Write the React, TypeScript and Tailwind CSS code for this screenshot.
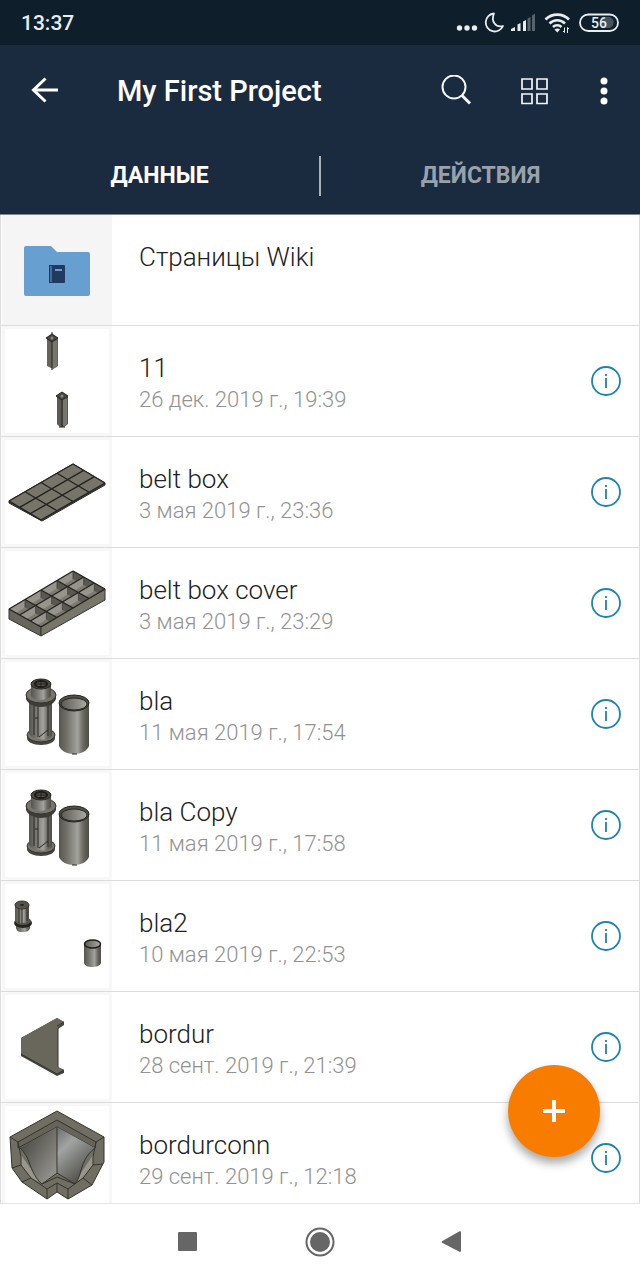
import type { ReactNode } from "react";

const boxTop = { top: [71, 27], right: [103, 46], left: [7, 64] };
const coverTop = { top: [71, 23], right: [103, 41], left: [7, 61] };

// lines of a 4x3 grid on a parallelogram seen from above
const gridPath = ({ top, right, left }: typeof boxTop) => {
  const sx = right[0] - top[0];
  const sy = right[1] - top[1];
  const lx = left[0] - top[0];
  const ly = left[1] - top[1];
  let d = "";
  for (let i = 0; i <= 4; i++) {
    d += `M${top[0] + (lx * i) / 4} ${top[1] + (ly * i) / 4}l${sx} ${sy}`;
  }
  for (let i = 0; i <= 3; i++) {
    d += `M${top[0] + (sx * i) / 3} ${top[1] + (sy * i) / 3}l${lx} ${ly}`;
  }
  return d;
};

// top corner of every compartment of the cover
const cells = [0, 1, 2, 3].flatMap((i) =>
  [0, 1, 2].map((j) => [71 - 16 * i + (32 * j) / 3, 23 + 9.5 * i + 6 * j])
);

const Thumb = ({ children }: { children: ReactNode }) => (
  <svg viewBox="0 0 110 110" className="size-[110px]" aria-hidden="true">
    <defs>
      <linearGradient id="metal">
        <stop offset="0" stopColor="#55544e" />
        <stop offset="0.3" stopColor="#77766f" />
        <stop offset="0.62" stopColor="#a3a39e" />
        <stop offset="0.8" stopColor="#6b6a63" />
        <stop offset="1" stopColor="#4c4b45" />
      </linearGradient>
      <linearGradient id="inside">
        <stop offset="0" stopColor="#5b5a53" />
        <stop offset="1" stopColor="#aaaaa6" />
      </linearGradient>
      <linearGradient id="wallLeft" x1="0" y1="0" x2="1" y2="1">
        <stop offset="0.2" stopColor="#504f49" />
        <stop offset="1" stopColor="#a09f99" />
      </linearGradient>
      <linearGradient id="wallRight" x1="0" y1="0" x2="0.6" y2="1">
        <stop offset="0" stopColor="#6b6d6d" />
        <stop offset="0.35" stopColor="#a1a4a3" />
        <stop offset="1" stopColor="#4b4a44" />
      </linearGradient>
    </defs>
    <rect x="3" y="3" width="104" height="104" fill="#fff" />
    {children}
  </svg>
);

const Posts = () => (
  <Thumb>
    <path d="M45 13l5-3 6 3v27l-5 3-6-3z" fill="#66645a" />
    <path d="M50 15h5v26l-5 2z" fill="#77756c" />
    <path d="M44 12l6-4 6 4-6 4z" fill="#46453e" stroke="#24231f" strokeWidth="1" />
    <circle cx="50" cy="12" r="1.5" fill="#8b897f" />
    <path d="M50 16v28M50 6v3" stroke="#24231f" strokeWidth="1" />
    <path d="M55 71l5-3 6 3v27l-4 3h-4l-3-3z" fill="#5b5950" />
    <path d="M61 73h4v25l-4 3z" fill="#77756c" />
    <path d="M54 70l6-4 6 4-6 4z" fill="#46453e" stroke="#24231f" strokeWidth="1" />
    <circle cx="60" cy="70" r="1.5" fill="#8b897f" />
    <path d="M60 74v27M57 101h6" stroke="#24231f" strokeWidth="1" />
  </Thumb>
);

const BeltBox = () => (
  <Thumb>
    <path d="M7 64L71 27l32 19v2L40 84 7 66z" fill="#45443d" stroke="#2b2a26" />
    <path d="M7 64L71 27l32 19-63 37z" fill="#77756a" />
    <path d={gridPath(boxTop)} fill="none" stroke="#24231f" strokeWidth="1.4" />
  </Thumb>
);

const BeltBoxCover = () => (
  <Thumb>
    <path d="M7 61l32 17v10L7 71z" fill="#68665c" stroke="#34332d" strokeWidth="1" />
    <path d="M39 78l64-37v11L39 88z" fill="#78766b" stroke="#34332d" strokeWidth="1" />
    <path d="M7 61L71 23l32 18-64 37z" fill="#7b7970" />
    {cells.map(([x, y]) => (
      <g key={`${x}-${y}`}>
        <path d={`M${x} ${y}v8l3.800 2.100 6.900-4.100z`} fill="#5a5951" />
        <path d={`M${x} ${y}v8l-9.100 5.400-6.900-3.900z`} fill="#96948c" />
        <path d={`M${x} ${y}v8`} stroke="#3d3c36" strokeWidth="0.800" />
      </g>
    ))}
    <path d={gridPath(coverTop)} fill="none" stroke="#24231f" strokeWidth="1.4" />
  </Thumb>
);

const Bla = () => (
  <Thumb>
    <path d="M25 76v3c0 4 6 7 14 7s14-3 14-7v-3z" fill="#45443e" />
    <ellipse cx="39" cy="76" rx="14" ry="7" fill="#77766e" stroke="#34332e" strokeWidth="1" />
    <path d="M27 42h23v35c-4 4-9 4-12 3-5 0-9-2-11-5z" fill="url(#metal)" />
    <path d="M32 47v29M36 47v31M46 46v31M33 59h3M37 78l9-7" fill="none" stroke="#282722" strokeWidth="1" />
    <path d="M24 36v4c2 5 8 8 15 8s13-3 15-8v-4z" fill="#3d3c36" />
    <ellipse cx="39" cy="36" rx="15" ry="8" fill="#77766e" stroke="#34332e" strokeWidth="1" />
    <path d="M29 25v12c3 5 17 5 20 0V25z" fill="url(#metal)" />
    <ellipse cx="39" cy="25" rx="10" ry="5" fill="#4a4943" stroke="#24231f" strokeWidth="1" />
    <ellipse cx="39" cy="25" rx="6" ry="3" fill="#5a5951" stroke="#1d1c19" strokeWidth="2" />
    <path d="M34 25h10M39 22v6" stroke="#1d1c19" strokeWidth="1" />
    <path d="M57 44v43c2 5 8 8 15 8s13-3 15-8V44z" fill="url(#metal)" />
    <ellipse cx="72" cy="44" rx="15" ry="8" fill="#504f49" stroke="#24231f" strokeWidth="1" />
    <ellipse cx="72" cy="45" rx="13" ry="6" fill="url(#inside)" stroke="#282722" strokeWidth="1" />
    <path d="M70 95h5" stroke="#24231f" strokeWidth="1" />
  </Thumb>
);

const Bla2 = () => (
  <Thumb>
    <path d="M14 43v4c1 4 3 4 7 4s6-1 7-4v-4z" fill="url(#metal)" />
    <ellipse cx="21" cy="42" rx="9" ry="5" fill="#24231f" />
    <ellipse cx="21" cy="40" rx="8" ry="4" fill="#56554e" />
    <path d="M13 24v15c2 4 12 4 14 0V24z" fill="url(#metal)" />
    <path d="M17 28v14M20 28v14M25 27v13" stroke="#2f2e29" strokeWidth="1" />
    <ellipse cx="20" cy="24" rx="7" ry="4" fill="#56554d" stroke="#34332e" strokeWidth="1" />
    <ellipse cx="20" cy="24" rx="2" ry="1" fill="#24231f" />
    <path d="M82 63v19c1 3 4 4 8 4s8-1 9-4V63z" fill="url(#metal)" />
    <ellipse cx="90.500" cy="63" rx="8" ry="4" fill="url(#inside)" stroke="#1d1c19" strokeWidth="1.5" />
  </Thumb>
);

const Bordur = () => (
  <Thumb>
    <path d="M19 46l36-20 7 4v3l-6 4v38l6 3v3l-7 3-36-20z" fill="#45443d" />
    <path d="M19 46l36-20 7 4-6 5v40l6 3-7 4-36-20z" fill="#69675c" />
    <path d="M56 36v39M19 62l36 20 7-4M55 34l7-4" fill="none" stroke="#34332d" strokeWidth="1" />
  </Thumb>
);

const BordurConn = () => (
  <Thumb>
    <path
      d="M55 8l47 26v25L90 82 66 96l-11-7-10 7-25-17-10-14-2-31z"
      fill="#706e63"
      stroke="#34332d"
      strokeWidth="1"
    />
    <path d="M55 17L16 39v6l39-21 38 21 1-6z" fill="#66645a" stroke="#34332d" strokeWidth="1" />
    <path d="M19 52v10l10 13 10 5z" fill="#98968d" />
    <path d="M91 52v10L81 75l-9 5z" fill="#98968d" />
    <path
      d="M16 39l3 15v8l10 13 16 11M94 39l-3 15v8L81 75 66 86M8 34l8 5M102 34l-8 5M10 65l9-3M20 79l9-4M101 61l-10 1M90 82l-9-7"
      fill="none"
      stroke="#34332d"
      strokeWidth="1"
    />
    <path d="M55 24L18 45c4 4 7 8 9 14 3 9 7 17 13 22l15-11z" fill="url(#wallLeft)" />
    <path d="M55 24l38 21c-6 5-9 9-11 14-3 6-4 16-9 22L55 70z" fill="url(#wallRight)" />
    <path
      d="M18 45c4 4 7 8 9 14 3 9 7 17 13 22l15-11 18 11c5-6 6-16 9-22 2-5 5-9 11-14M55 24v46"
      fill="none"
      stroke="#34332d"
      strokeWidth="1"
    />
    <path
      d="M40 81l15-7 18 7M45 86l10-6 11 6M45 86v10M66 86v10M55 80v9"
      fill="none"
      stroke="#34332d"
      strokeWidth="1"
    />
  </Thumb>
);

const WikiFolder = () => (
  <svg viewBox="0 0 110 110" className="size-[110px]" aria-hidden="true">
    <path d="M22 33q0-2 2-2h25l6 6h31q2 0 2 2v40q0 2-2 2H24q-2 0-2-2z" fill="#67a0d0" />
    <path d="M47 50h15q1 0 1 1v16q0 1-1 1H47z" fill="#203a60" />
    <path d="M49 51v16" stroke="#67a0d0" strokeWidth="1" />
    <path d="M53 55h7" stroke="#67a0d0" strokeWidth="2" />
  </svg>
);

const items = [
  { name: "11", date: "26 дек. 2019 г., 19:39", thumb: <Posts /> },
  { name: "belt box", date: "3 мая 2019 г., 23:36", thumb: <BeltBox /> },
  { name: "belt box cover", date: "3 мая 2019 г., 23:29", thumb: <BeltBoxCover /> },
  { name: "bla", date: "11 мая 2019 г., 17:54", thumb: <Bla /> },
  { name: "bla Copy", date: "11 мая 2019 г., 17:58", thumb: <Bla /> },
  { name: "bla2", date: "10 мая 2019 г., 22:53", thumb: <Bla2 /> },
  { name: "bordur", date: "28 сент. 2019 г., 21:39", thumb: <Bordur /> },
  { name: "bordurconn", date: "29 сент. 2019 г., 12:18", thumb: <BordurConn /> },
];

const StatusBar = () => (
  <div className="flex h-[45px] items-center justify-between bg-[#0f1e2b] pr-5 pl-[21px] text-[#e8edf1]">
    <span className="text-[21px] leading-7 font-medium">13:37</span>
    <svg viewBox="456 10 164 26" className="h-[26px] w-[164px]" aria-hidden="true">
      <g fill="#e8edf1">
        <circle cx="459.500" cy="28" r="2.700" />
        <circle cx="467" cy="28" r="2.700" />
        <circle cx="474.500" cy="28" r="2.700" />
      </g>
      <path
        d="M494 13.500a9 9 0 1 0 9 12.500c-7 2-12.500-4.500-9-12.500z"
        fill="none"
        stroke="#e8edf1"
        strokeWidth="1.800"
        strokeLinejoin="round"
      />
      <path d="M511 31v-2l4-2v4zM517.500 31v-6.500l3-1.500v8zM523 31v-9.500l3-1.500v11z" fill="#e8edf1" />
      <path d="M527.500 31V18.500l3-1.500v14zM532 31V15.500l3-2v17.500z" fill="#56626d" />
      <g fill="none" stroke="#e8edf1" strokeWidth="2.600">
        <path d="M545.500 19.500a16.500 16.500 0 0 1 23.500 0" />
        <path d="M549.500 23.500a11 11 0 0 1 15.500 0" />
        <path d="M553 27a6 6 0 0 1 8.500 0" />
      </g>
      <path d="M554.500 29.500q3-2 5.500 0l-2.700 3z" fill="#e8edf1" />
      <path d="M564.500 27.500v5l-1.500-1.500M567.500 33v-5.500l1.500 1.500" fill="none" stroke="#e8edf1" strokeWidth="1" />
      <path d="M602 17h8a6 6 0 0 1 0 11h-8z" fill="#46525d" />
      <rect x="580" y="14.500" width="38" height="16.500" rx="8.250" fill="none" stroke="#e8edf1" strokeWidth="1.800" />
      <text x="599" y="28" textAnchor="middle" fill="#e8edf1" className="text-[14px] font-medium">
        56
      </text>
    </svg>
  </div>
);

const Toolbar = () => (
  <div className="flex h-[92px] items-center bg-[#1a2b3f] pr-7 pl-7">
    <button aria-label="Назад" className="mr-[57px]">
      <svg viewBox="0 0 32 32" className="size-8" fill="none" stroke="#fff" strokeWidth="3">
        <path d="M30 15H6M17.500 3.500L5.500 15l12 11.500" />
      </svg>
    </button>
    <h1 className="flex-1 text-[29px] leading-9 font-medium text-white">My First Project</h1>
    <button aria-label="Поиск">
      <svg viewBox="0 0 32 32" className="size-8" fill="none" stroke="#f4f7fa" strokeWidth="2">
        <circle cx="14" cy="12" r="11.500" />
        <path d="M22 20.500l8 8" strokeWidth="3" />
      </svg>
    </button>
    <button aria-label="Сетка" className="mr-12 ml-12">
      <svg viewBox="0 0 28 28" className="size-7" fill="none" stroke="#f4f7fa" strokeWidth="1.700">
        <path d="M2 2h10v10H2zM17 2h10v10H17zM2 17h10v9.500H2zM17 17h10v9.500H17z" />
      </svg>
    </button>
    <button aria-label="Ещё">
      <svg viewBox="0 0 16 28" className="h-7 w-4" fill="#fff">
        <circle cx="8" cy="4" r="3.500" />
        <circle cx="8" cy="14" r="3.500" />
        <circle cx="8" cy="24" r="3.500" />
      </svg>
    </button>
  </div>
);

const Tabs = () => (
  <div className="flex h-[78px] items-center border-b border-[#7d8791] bg-[#1a2b3f] text-[23px] leading-7 font-bold">
    <button className="flex-1 text-white">ДАННЫЕ</button>
    <span className="h-10 w-0.5 bg-[#a9b1b9]" />
    <button className="flex-1 text-[#99a2ac]">ДЕЙСТВИЯ</button>
  </div>
);

const App = () => {
  return (
    <div className="flex h-screen flex-col bg-white font-[Roboto,'Noto_Sans',sans-serif]">
      <header>
        <StatusBar />
        <Toolbar />
        <Tabs />
      </header>
      <main className="relative min-h-0 flex-1">
        <ul className="h-full overflow-y-auto border-x border-[#dcdcdc] [scrollbar-width:none]">
          <li className="flex border-b border-[#dcdcdc] pl-px">
            <div className="bg-[#f5f5f5]">
              <WikiFolder />
            </div>
            <p className="px-[27px] pt-6 text-[26px] leading-9 font-light text-[#222]">Страницы Wiki</p>
          </li>
          {items.map((item) => (
            <li key={item.name} className="flex border-b border-[#dcdcdc] pr-[17px] pl-px">
              <div className="bg-[#f7f7f7]">{item.thumb}</div>
              <div className="flex-1 px-[27px] pt-6 font-light">
                <p className="text-[26px] leading-9 text-[#222]">{item.name}</p>
                <p className="text-[22px] leading-7 text-[#929292]">{item.date}</p>
              </div>
              <button aria-label={`Сведения: ${item.name}`}>
                <svg viewBox="0 0 32 32" className="size-8" fill="none" stroke="#1d83b1">
                  <circle cx="16" cy="16" r="14" strokeWidth="1.800" />
                  <path d="M16 13v10M16 9v2" strokeWidth="1.800" />
                </svg>
              </button>
            </li>
          ))}
        </ul>
        <button
          aria-label="Добавить"
          className="absolute right-10 bottom-[46px] flex size-[92px] items-center justify-center rounded-full bg-[#f77c00] shadow-[0_6px_10px_rgba(0,0,0,0.35)]"
        >
          <svg viewBox="0 0 24 24" className="size-6" stroke="#fff" strokeWidth="4">
            <path d="M12 1v22M1 12h22" />
          </svg>
        </button>
      </main>
      <nav className="flex h-[77px] items-center justify-center gap-[100px] border-t border-[#e4e4e4] bg-white">
        <button aria-label="Недавние">
          <svg viewBox="0 0 32 32" className="size-8" fill="#666">
            <rect x="6" y="6" width="19" height="19" rx="1" />
          </svg>
        </button>
        <button aria-label="Домой">
          <svg viewBox="0 0 32 32" className="size-8" fill="#666">
            <circle cx="16" cy="16" r="13.500" fill="none" stroke="#666" strokeWidth="2" />
            <circle cx="16" cy="16" r="10" />
          </svg>
        </button>
        <button aria-label="Назад">
          <svg viewBox="0 0 32 32" className="size-8" fill="#666">
            <path d="M6 15.200L23.500 5.300q1.500-.5 1.500 1v18.500q0 1.500-1.500 1L6 16.800q-1-.8 0-1.600z" />
          </svg>
        </button>
      </nav>
    </div>
  );
};

export default App;
